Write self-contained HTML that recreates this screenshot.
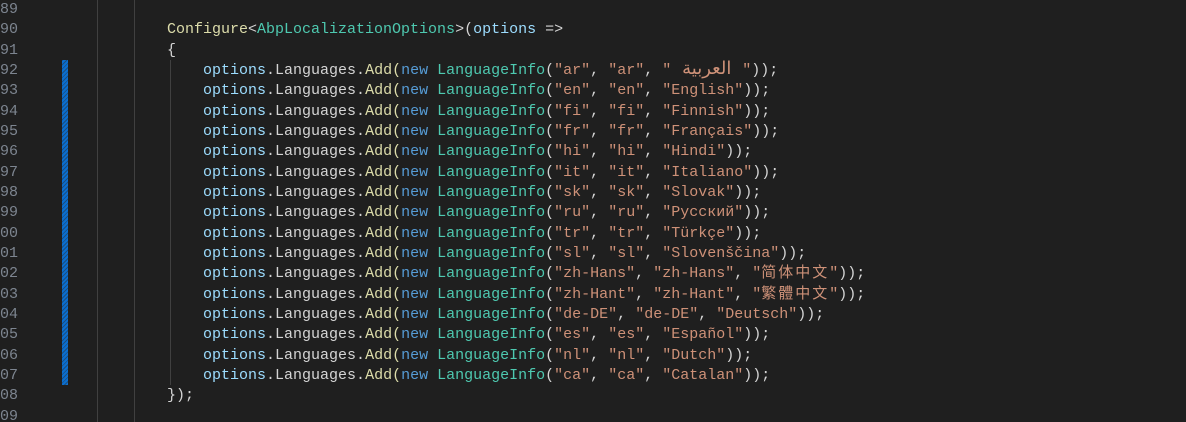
<!DOCTYPE html>
<html><head><meta charset="utf-8"><style>
html,body{margin:0;padding:0;background:#1f1f1f;width:1186px;height:422px;overflow:hidden;position:relative}
.code{position:absolute;left:0;top:0px;font-family:"Liberation Mono","Noto Sans CJK SC",monospace;font-size:15px;line-height:20.33px;white-space:pre;color:#d4d4d4}
.ln{position:absolute;left:0;top:0px;font-family:"Liberation Mono",monospace;font-size:15px;line-height:20.33px;white-space:pre;color:#7d8590}
.c{position:absolute;left:167px;top:0px}
.g{position:absolute;width:1px;background:#404040}
.bar{position:absolute;left:62px;top:60px;width:6px;height:325px;background:repeating-linear-gradient(-45deg,#0a6ed1 0 2px,#1a4f80 2px 3px)}
.f{color:#dcdcaa}.t{color:#4ec9b0}.v{color:#9cdcfe}.k{color:#569cd6}.s{color:#ce9178}
.cj{letter-spacing:2px}.ar{display:inline-block;width:71px;text-align:center;font-family:"DejaVu Sans",sans-serif;font-size:18px;line-height:15px}
</style></head><body>
<div class="g" style="left:97px;top:0;height:422px"></div>
<div class="g" style="left:134px;top:0;height:422px"></div>
<div class="g" style="left:170px;top:60px;height:325px"></div>
<div class="bar"></div>
<div class="ln">89
90
91
92
93
94
95
96
97
98
99
00
01
02
03
04
05
06
07
08
09</div>
<div class="code c">
<span class="f">Configure</span>&lt;<span class="t">AbpLocalizationOptions</span>&gt;(<span class="v">options</span> =&gt;
{
    <span class="v">options</span>.Languages.<span class="f">Add(</span><span class="k">new</span> <span class="t">LanguageInfo</span>(<span class="s">"ar"</span>, <span class="s">"ar"</span>, <span class="s">"<span class="ar">العربية</span>"</span>));
    <span class="v">options</span>.Languages.<span class="f">Add(</span><span class="k">new</span> <span class="t">LanguageInfo</span>(<span class="s">"en"</span>, <span class="s">"en"</span>, <span class="s">"English"</span>));
    <span class="v">options</span>.Languages.<span class="f">Add(</span><span class="k">new</span> <span class="t">LanguageInfo</span>(<span class="s">"fi"</span>, <span class="s">"fi"</span>, <span class="s">"Finnish"</span>));
    <span class="v">options</span>.Languages.<span class="f">Add(</span><span class="k">new</span> <span class="t">LanguageInfo</span>(<span class="s">"fr"</span>, <span class="s">"fr"</span>, <span class="s">"Français"</span>));
    <span class="v">options</span>.Languages.<span class="f">Add(</span><span class="k">new</span> <span class="t">LanguageInfo</span>(<span class="s">"hi"</span>, <span class="s">"hi"</span>, <span class="s">"Hindi"</span>));
    <span class="v">options</span>.Languages.<span class="f">Add(</span><span class="k">new</span> <span class="t">LanguageInfo</span>(<span class="s">"it"</span>, <span class="s">"it"</span>, <span class="s">"Italiano"</span>));
    <span class="v">options</span>.Languages.<span class="f">Add(</span><span class="k">new</span> <span class="t">LanguageInfo</span>(<span class="s">"sk"</span>, <span class="s">"sk"</span>, <span class="s">"Slovak"</span>));
    <span class="v">options</span>.Languages.<span class="f">Add(</span><span class="k">new</span> <span class="t">LanguageInfo</span>(<span class="s">"ru"</span>, <span class="s">"ru"</span>, <span class="s">"Русский"</span>));
    <span class="v">options</span>.Languages.<span class="f">Add(</span><span class="k">new</span> <span class="t">LanguageInfo</span>(<span class="s">"tr"</span>, <span class="s">"tr"</span>, <span class="s">"Türkçe"</span>));
    <span class="v">options</span>.Languages.<span class="f">Add(</span><span class="k">new</span> <span class="t">LanguageInfo</span>(<span class="s">"sl"</span>, <span class="s">"sl"</span>, <span class="s">"Slovenščina"</span>));
    <span class="v">options</span>.Languages.<span class="f">Add(</span><span class="k">new</span> <span class="t">LanguageInfo</span>(<span class="s">"zh-Hans"</span>, <span class="s">"zh-Hans"</span>, <span class="s">"<span class="cj">简体中文</span>"</span>));
    <span class="v">options</span>.Languages.<span class="f">Add(</span><span class="k">new</span> <span class="t">LanguageInfo</span>(<span class="s">"zh-Hant"</span>, <span class="s">"zh-Hant"</span>, <span class="s">"<span class="cj">繁體中文</span>"</span>));
    <span class="v">options</span>.Languages.<span class="f">Add(</span><span class="k">new</span> <span class="t">LanguageInfo</span>(<span class="s">"de-DE"</span>, <span class="s">"de-DE"</span>, <span class="s">"Deutsch"</span>));
    <span class="v">options</span>.Languages.<span class="f">Add(</span><span class="k">new</span> <span class="t">LanguageInfo</span>(<span class="s">"es"</span>, <span class="s">"es"</span>, <span class="s">"Español"</span>));
    <span class="v">options</span>.Languages.<span class="f">Add(</span><span class="k">new</span> <span class="t">LanguageInfo</span>(<span class="s">"nl"</span>, <span class="s">"nl"</span>, <span class="s">"Dutch"</span>));
    <span class="v">options</span>.Languages.<span class="f">Add(</span><span class="k">new</span> <span class="t">LanguageInfo</span>(<span class="s">"ca"</span>, <span class="s">"ca"</span>, <span class="s">"Catalan"</span>));
});
</div>
</body></html>
